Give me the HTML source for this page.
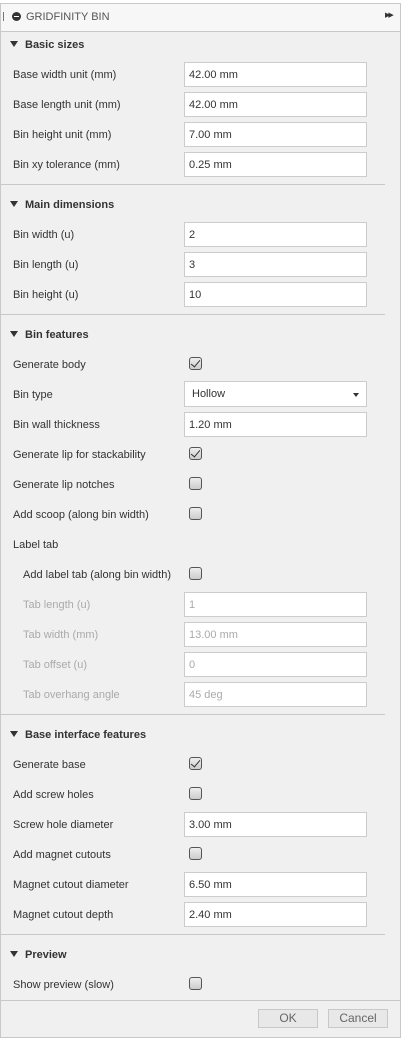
<!DOCTYPE html><html><head><style>
*{margin:0;padding:0;box-sizing:border-box}
body{width:402px;height:1038px;background:#fff;font-family:"Liberation Sans",Arial,sans-serif;font-size:11px;color:#333;position:relative;overflow:hidden}
#p{position:absolute;left:0;top:3px;width:401px;height:1035px;background:#f0f0f0;border:1px solid #c8c8c8}
#h{position:absolute;left:0;top:3px;width:401px;height:29px;background:#f7f7f7;border:1px solid #c8c8c8}
.a{position:absolute}
.l{position:absolute;left:13px;line-height:14px;margin-top:1px}
.s{position:absolute;left:10px;font-weight:bold;line-height:14px;margin-top:1px}
.s:before{content:"";display:inline-block;border-left:4px solid transparent;border-right:4px solid transparent;border-top:6px solid #333;margin-right:7px;vertical-align:1px}
.i{position:absolute;left:184px;width:183px;height:25px;background:#fff;border:1px solid #ccc;padding-left:4px;line-height:25px}
.c{position:absolute;left:189px;width:13px;height:13px;border:1px solid #555;border-radius:3px;background:linear-gradient(#eee,#ccc)}
.c.k:after{content:"";position:absolute;left:3px;top:0px;width:4px;height:8px;border:solid #333;border-width:0 1.5px 1.5px 0;transform:rotate(40deg)}
.sep{position:absolute;left:0;width:385px;height:1px;background:#c8c8c8}
.d{color:#aaa}
.b{position:absolute;top:1009px;height:19px;border:1px solid #c8c8c8;background:#e8e8e8;color:#666;font-size:12px;text-align:center;line-height:17px}
</style></head><body>
<div id="p"></div><div id="h"></div>
<div class="a" style="left:3px;top:12px;width:1px;height:9px;background:#777"></div>
<div class="a" style="left:12px;top:12px;width:9px;height:9px;border-radius:50%;background:#333"></div>
<div class="a" style="left:14px;top:16px;width:5px;height:1px;background:#fff"></div>
<div class="a" style="left:26px;top:10px;color:#555;line-height:14px">GRIDFINITY BIN</div>
<div class="a" style="left:385px;top:11px;font-size:7px;color:#333;letter-spacing:-2px">▶▶</div>

<div class="s" style="top:37px">Basic sizes</div>
<div class="l" style="top:67px">Base width unit (mm)</div><div class="i" style="top:62px">42.00 mm</div>
<div class="l" style="top:97px">Base length unit (mm)</div><div class="i" style="top:92px">42.00 mm</div>
<div class="l" style="top:127px">Bin height unit (mm)</div><div class="i" style="top:122px">7.00 mm</div>
<div class="l" style="top:157px">Bin xy tolerance (mm)</div><div class="i" style="top:152px">0.25 mm</div>
<div class="sep" style="top:184px"></div>
<div class="s" style="top:197px">Main dimensions</div>
<div class="l" style="top:227px">Bin width (u)</div><div class="i" style="top:222px">2</div>
<div class="l" style="top:257px">Bin length (u)</div><div class="i" style="top:252px">3</div>
<div class="l" style="top:287px">Bin height (u)</div><div class="i" style="top:282px">10</div>
<div class="sep" style="top:314px"></div>
<div class="s" style="top:327px">Bin features</div>
<div class="l" style="top:357px">Generate body</div><div class="c k" style="top:357px"></div>
<div class="l" style="top:387px">Bin type</div><div class="i" style="top:381px;height:26px;padding-left:7px">Hollow<span style="position:absolute;right:7px;top:11px;border-left:3px solid transparent;border-right:3px solid transparent;border-top:4px solid #333"></span></div>
<div class="l" style="top:417px">Bin wall thickness</div><div class="i" style="top:412px">1.20 mm</div>
<div class="l" style="top:447px">Generate lip for stackability</div><div class="c k" style="top:447px"></div>
<div class="l" style="top:477px">Generate lip notches</div><div class="c" style="top:477px"></div>
<div class="l" style="top:507px">Add scoop (along bin width)</div><div class="c" style="top:507px"></div>
<div class="l" style="top:537px">Label tab</div>
<div class="l" style="top:567px;left:23px">Add label tab (along bin width)</div><div class="c" style="top:567px"></div>
<div class="l d" style="top:597px;left:23px">Tab length (u)</div><div class="i d" style="top:592px">1</div>
<div class="l d" style="top:627px;left:23px">Tab width (mm)</div><div class="i d" style="top:622px">13.00 mm</div>
<div class="l d" style="top:657px;left:23px">Tab offset (u)</div><div class="i d" style="top:652px">0</div>
<div class="l d" style="top:687px;left:23px">Tab overhang angle</div><div class="i d" style="top:682px">45 deg</div>
<div class="sep" style="top:714px"></div>
<div class="s" style="top:727px">Base interface features</div>
<div class="l" style="top:757px">Generate base</div><div class="c k" style="top:757px"></div>
<div class="l" style="top:787px">Add screw holes</div><div class="c" style="top:787px"></div>
<div class="l" style="top:817px">Screw hole diameter</div><div class="i" style="top:812px">3.00 mm</div>
<div class="l" style="top:847px">Add magnet cutouts</div><div class="c" style="top:847px"></div>
<div class="l" style="top:877px">Magnet cutout diameter</div><div class="i" style="top:872px">6.50 mm</div>
<div class="l" style="top:907px">Magnet cutout depth</div><div class="i" style="top:902px">2.40 mm</div>
<div class="sep" style="top:934px"></div>
<div class="s" style="top:947px">Preview</div>
<div class="l" style="top:977px">Show preview (slow)</div><div class="c" style="top:977px"></div>
<div class="sep" style="top:1000px;width:401px"></div>
<div class="b" style="left:258px;width:60px">OK</div>
<div class="b" style="left:328px;width:60px">Cancel</div>
</body></html>
